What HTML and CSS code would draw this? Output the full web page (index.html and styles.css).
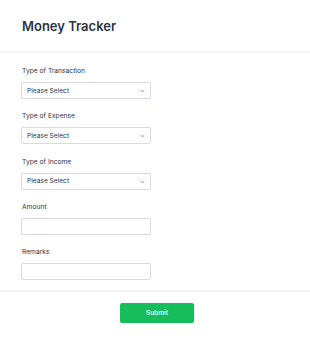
FILE: index.html
```html
<!DOCTYPE html>
<html lang="en">
<head>
  <meta charset="UTF-8">
  <title>Money Tracker</title>
  <link rel="stylesheet" href="styles.css">
</head>
<body>
  <!-- Header -->
  <div class="header">
    <h1>Money Tracker</h1>
  </div>

  <!-- Fields -->
  <form class="form">
    <div class="field">
      <label for="transaction">Type of Transaction</label>
      <div class="select-wrap">
        <select id="transaction"><option>Please Select</option></select>
        <svg class="chevron" viewBox="0 0 6 4"><path d="M1 1l2 2 2-2" fill="none" stroke="currentColor" stroke-width="1.1"/></svg>
      </div>
    </div>

    <div class="field">
      <label for="expense">Type of Expense</label>
      <div class="select-wrap">
        <select id="expense"><option>Please Select</option></select>
        <svg class="chevron" viewBox="0 0 6 4"><path d="M1 1l2 2 2-2" fill="none" stroke="currentColor" stroke-width="1.1"/></svg>
      </div>
    </div>

    <div class="field">
      <label for="income">Type of Income</label>
      <div class="select-wrap">
        <select id="income"><option>Please Select</option></select>
        <svg class="chevron" viewBox="0 0 6 4"><path d="M1 1l2 2 2-2" fill="none" stroke="currentColor" stroke-width="1.1"/></svg>
      </div>
    </div>

    <div class="field">
      <label for="amount">Amount</label>
      <input type="text" id="amount">
    </div>

    <div class="field">
      <label for="remarks">Remarks</label>
      <input type="text" id="remarks">
    </div>
  </form>

  <!-- Footer -->
  <div class="footer">
    <button type="button" class="submit">Submit</button>
  </div>
</body>
</html>
```

FILE: styles.css
```css
* {
  margin: 0;
  padding: 0;
  box-sizing: border-box;
}

body {
  font-family: Inter, "Noto Sans", sans-serif;
  color: #2c3345;
  background: #fff;
  width: 310px;
}

/* Header */
.header {
  height: 53px;
  padding: 17px 0 0 22px;
  border-bottom: 2px solid #f3f3f5;
}

h1 {
  font-size: 13px;
  line-height: 18px;
  font-weight: 600;
  color: #2c3345;
}

/* Form */
.form {
  padding: 13px 21px 10px;
}

.field {
  margin-bottom: 12.25px;
}

.field:last-child {
  margin-bottom: 0;
}

label {
  display: block;
  font-size: 6.7px;
  line-height: 10px;
  margin: 0 0 6px 1px;
  color: #2c3345;
}

select,
input[type="text"] {
  display: block;
  width: 130px;
  height: 17px;
  border: 1px solid #d8dae0;
  border-radius: 2px;
  background: #fff;
  font-family: inherit;
  font-size: 6.6px;
  color: #2c3345;
  padding: 0 5px;
  outline: none;
}

select {
  appearance: none;
  -webkit-appearance: none;
}

.select-wrap {
  position: relative;
  width: 130px;
}

.chevron {
  position: absolute;
  right: 6px;
  top: 7px;
  width: 5px;
  height: 4px;
  color: #7b8194;
}

/* Footer */
.footer {
  border-top: 2px solid #f3f3f5;
  padding-top: 11px;
  display: flex;
  justify-content: center;
  padding-left: 4px;
}

.submit {
  width: 74px;
  height: 20px;
  border: none;
  border-radius: 2px;
  background: #18bd5b;
  color: #fff;
  font-family: inherit;
  font-size: 6.5px;
  font-weight: 500;
}
```
